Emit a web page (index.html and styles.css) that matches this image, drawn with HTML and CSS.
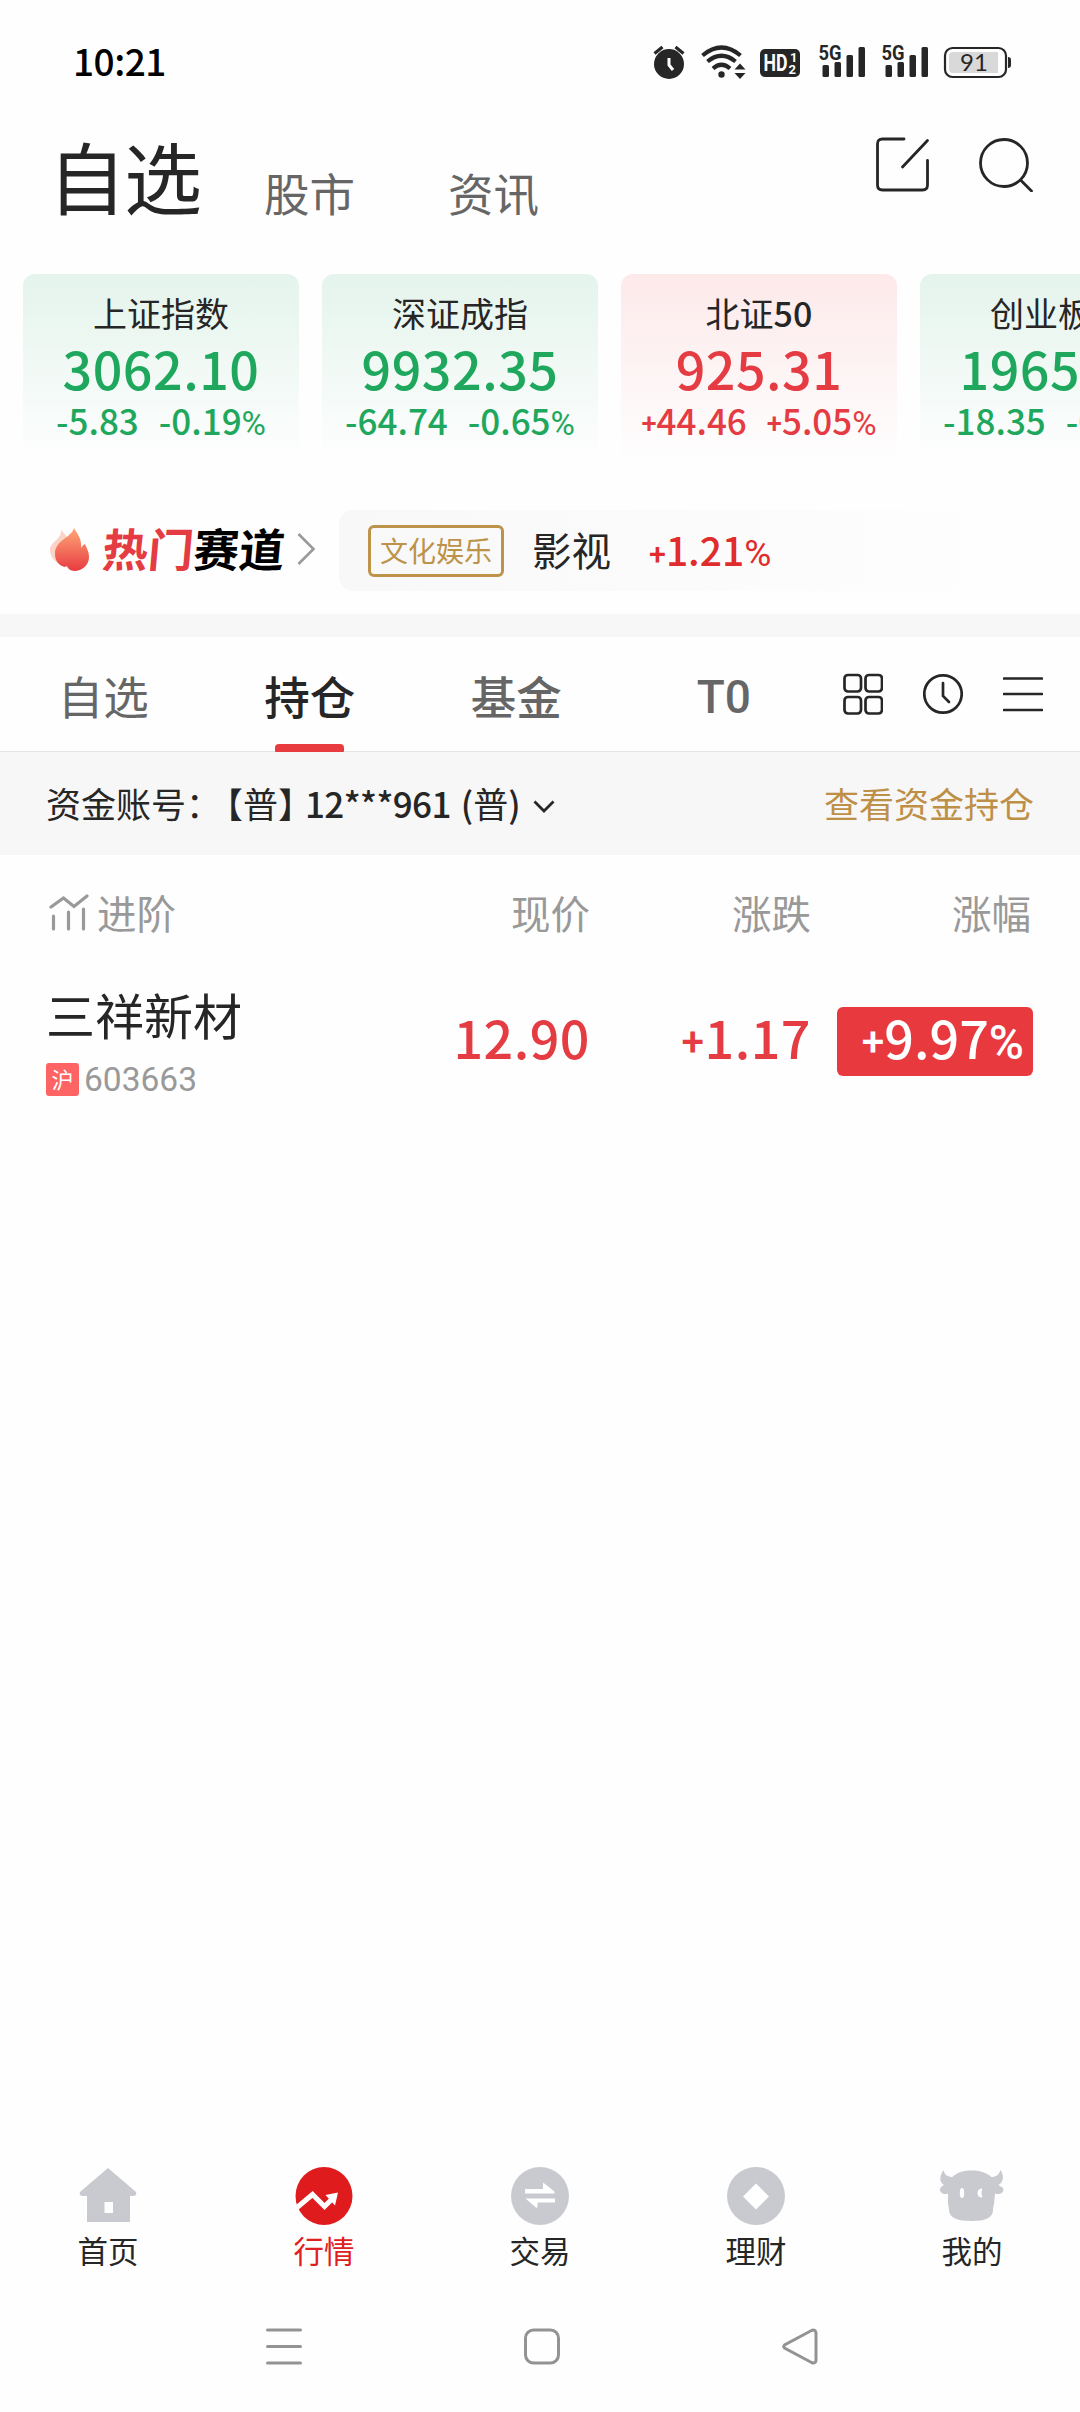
FILE: index.html
```html
<!DOCTYPE html>
<html lang="zh-CN">
<head>
    <meta charset="UTF-8">
    <meta name="viewport" content="width=device-width, initial-scale=1.0">
    <title>行情 - 自选</title>
    <link rel="stylesheet" href="styles.css">
</head>
<body>
    <div class="app">
        <div class="status-bar">
            <span class="time">10:21</span>
            <svg class="status-icons" width="360" height="40" viewBox="652 42 360 40">
                <!-- alarm -->
                <circle cx="669" cy="64" r="15" fill="#262626"/>
                <path d="M654.5 53.5l8-6.5M683.5 53.5l-8-6.5" stroke="#262626" stroke-width="3.2"/>
                <path d="M669 58v7l4 5" fill="none" stroke="#fff" stroke-width="3"/>
                <!-- wifi -->
                <g fill="none" stroke="#262626" stroke-width="4.2">
                    <path d="M702.5 55.5q19-16 38 0"/>
                    <path d="M707.5 61.5q14-11.5 28 0"/>
                    <path d="M713 68.5q8.5-7.5 17 0"/>
                </g>
                <circle cx="721.5" cy="74.5" r="3.2" fill="#262626"/>
                <path d="M734.5 69.5l5.500-6 5.500 6zM734.5 73l5.500 6 5.500-6z" fill="#262626"/>
                <!-- HD -->
                <rect x="760" y="49" width="40" height="28" rx="5" fill="#262626"/>
                <text class="hd" x="763.5" y="71" textLength="24" lengthAdjust="spacingAndGlyphs">HD</text>
                <text class="hd-sub" x="790" y="62">1</text>
                <text class="hd-sub" x="788.5" y="73.5">2</text>
                <!-- signal -->
                <g fill="#262626">
                    <text class="net" x="818.5" y="60" textLength="23" lengthAdjust="spacingAndGlyphs">5G</text>
                    <rect x="822.5" y="65" width="6.5" height="12" rx="1.5"/>
                    <rect x="834.5" y="62" width="6.5" height="15" rx="1.5"/>
                    <rect x="846.5" y="55" width="6.5" height="22" rx="1.5"/>
                    <rect x="858.5" y="47" width="6.5" height="30" rx="1.5"/>
                </g>
                <g fill="#262626" transform="translate(63 0)">
                    <text class="net" x="818.5" y="60" textLength="23" lengthAdjust="spacingAndGlyphs">5G</text>
                    <rect x="822.5" y="65" width="6.5" height="12" rx="1.5"/>
                    <rect x="834.5" y="62" width="6.5" height="15" rx="1.5"/>
                    <rect x="846.5" y="55" width="6.5" height="22" rx="1.5"/>
                    <rect x="858.5" y="47" width="6.5" height="30" rx="1.5"/>
                </g>
                <!-- battery -->
                <rect x="945" y="48" width="61" height="29" rx="7.5" fill="none" stroke="#262626" stroke-width="2.2"/>
                <path d="M953 52h45v21h-45a4 4 0 0 1-4-4v-13a4 4 0 0 1 4-4z" fill="#d9d9d9"/>
                <path d="M1008 57q3 0 3 3v5q0 3-3 3z" fill="#262626"/>
                <text class="battery" x="974" y="71" text-anchor="middle">91</text>
            </svg>
        </div>

        <div class="header">
            <h1>自选</h1>
            <a class="channel">股市</a>
            <a class="channel">资讯</a>
            <div class="header-icons">
                <svg width="56" height="56" viewBox="0 0 56 56">
                    <path d="M29 3H7.500q-5 0-5 5v41q0 5 5 5h40q5 0 5-5V24.500M27.500 31l25-26.500"/>
                </svg>
                <svg width="56" height="56" viewBox="0 0 56 56">
                    <circle cx="26" cy="27" r="23.5"/>
                    <path d="M42.5 44L53.5 55"/>
                </svg>
            </div>
        </div>

        <div class="indexes">
            <div class="index-card down">
                <div class="index-name">上证指数</div>
                <div class="index-price">3062.10</div>
                <div class="index-change"><span>-5.83</span><span>-0.19<i class="pct">%</i></span></div>
            </div>
            <div class="index-card down">
                <div class="index-name">深证成指</div>
                <div class="index-price">9932.35</div>
                <div class="index-change"><span>-64.74</span><span>-0.65<i class="pct">%</i></span></div>
            </div>
            <div class="index-card up">
                <div class="index-name">北证<b>50</b></div>
                <div class="index-price">925.31</div>
                <div class="index-change"><span><i class="plus">+</i>44.46</span><span><i class="plus">+</i>5.05<i class="pct">%</i></span></div>
            </div>
            <div class="index-card down">
                <div class="index-name">创业板指</div>
                <div class="index-price">1965.02</div>
                <div class="index-change"><span>-18.35</span><span>-0.93<i class="pct">%</i></span></div>
            </div>
        </div>

        <div class="hot">
            <svg class="flame" width="42" height="46" viewBox="0 0 42 46">
                <defs>
                    <linearGradient id="fire" x1="0" y1="0" x2="0" y2="1">
                        <stop offset="0" stop-color="#ffa878"/>
                        <stop offset="1" stop-color="#e83b40"/>
                    </linearGradient>
                </defs>
                <path d="M12 4c5 5 8 9 8 14l-6 20C5 37 1 30 1 24c0-8 12-11 11-20z" fill="#fbd3c8"/>
                <path d="M25 2c-3 10-19 12-19 26 0 8 5 12 10 13 1-1 2-1 3 1 1 2 4 3 7 3 9-1 14-7 14-14 0-6-3-10-4-13-2 1-3 2-4 4 1-9-4-15-7-20z" fill="url(#fire)"/>
            </svg>
            <div class="hot-title"><em>热门</em>赛道</div>
            <svg class="hot-arrow" width="20" height="34" viewBox="0 0 20 34">
                <path d="M2.5 2L17.5 17 2.5 32"/>
            </svg>
            <div class="hot-pill">
                <span class="hot-tag">文化娱乐</span>
                <span class="hot-name">影视</span>
                <span class="hot-rate"><i class="plus">+</i>1.21<i class="pct">%</i></span>
            </div>
        </div>

        <div class="tabs">
            <a class="tab">自选</a>
            <a class="tab active">持仓</a>
            <a class="tab medium">基金</a>
            <a class="tab medium latin">T0</a>
            <div class="tab-icons">
                <svg width="40" height="42" viewBox="0 0 40 42">
                    <rect x="1.5" y="2" width="16.5" height="16.5" rx="3.5"/>
                    <rect x="22.5" y="2" width="16.5" height="16.5" rx="3.5"/>
                    <rect x="1.5" y="24" width="16.5" height="16.5" rx="3.5"/>
                    <rect x="22.5" y="24" width="16.5" height="16.5" rx="3.5"/>
                </svg>
                <svg width="40" height="42" viewBox="0 0 40 42">
                    <circle cx="20" cy="21" r="18.7"/>
                    <path d="M20 10v13l6 6"/>
                </svg>
                <svg width="40" height="42" viewBox="0 0 40 42">
                    <path d="M1 5.5h38M1 21h38M1 37h38"/>
                </svg>
            </div>
        </div>

        <div class="account">
            <span class="account-label">资金账号：</span>
            <span class="bracket">【</span><span>普</span><span class="bracket">】</span>
            <span class="account-no">12***961</span>
            <span class="account-type"><b>(</b>普<b>)</b></span>
            <svg width="24" height="16" viewBox="0 0 24 16"><path d="M2.5 2.5l9.500 9.500 9.500-9.500"/></svg>
            <a class="account-link">查看资金持仓</a>
        </div>

        <div class="row table-head">
            <div class="col-name">
                <svg width="40" height="38" viewBox="0 0 40 38">
                    <path d="M2 13L14.5 4 25 12.5 38 2M4.500 22v13M19.500 18v17M34.500 15v20"/>
                </svg>
                进阶
            </div>
            <div class="col">现价</div>
            <div class="col">涨跌</div>
            <div class="col">涨幅</div>
        </div>

        <div class="row stock">
            <div class="stock-info">
                <div class="stock-name">三祥新材</div>
                <div class="stock-code"><span class="market">沪</span>603663</div>
            </div>
            <div class="col price">12.90</div>
            <div class="col price"><i class="plus">+</i>1.17</div>
            <div class="col"><span class="rate-badge"><i class="plus">+</i>9.97<i class="pct">%</i></span></div>
        </div>

        <div class="bottom-nav">
            <a class="nav-item">
                <svg width="66" height="60" viewBox="0 0 66 60">
                    <path fill-rule="evenodd" d="M33 2L61 26q1.500 4-3.500 4H55V56H12V30H8.500q-5 0-3.500-4zM29.500 36v11h8.500v-11z"/>
                </svg>
                首页
            </a>
            <a class="nav-item active">
                <svg width="66" height="60" viewBox="0 0 66 60">
                    <ellipse cx="33" cy="30" rx="28.5" ry="29"/>
                    <path class="hole-line" d="M6 41.500L21.500 28.500 33.500 40.500 42 32"/>
                    <path class="hole" d="M34.500 29l12.500-2.500-3 13z"/>
                </svg>
                行情
            </a>
            <a class="nav-item">
                <svg width="66" height="60" viewBox="0 0 66 60">
                    <circle cx="33" cy="30" r="29"/>
                    <path class="hole" d="M18 23h18v-6.500l11.500 9v2H18zM48 32.500H18.500l11 9.500 1-1v-4.500H48z"/>
                </svg>
                交易
            </a>
            <a class="nav-item">
                <svg width="66" height="60" viewBox="0 0 66 60">
                    <circle cx="33" cy="30" r="29"/>
                    <path class="hole" d="M33 17.500L46 30.500 33 43.500 20 30.500z"/>
                </svg>
                理财
            </a>
            <a class="nav-item">
                <svg width="66" height="60" viewBox="0 0 66 60">
                    <path d="M4.500 4C.5 10 0 16 5 19q-4 2-4 5c0 3 4 5 8 3.500V38q1 3 1 6c0 8 9 11 22.500 11S54 52 54 44q0-3 1-6l1-10.500c4 1.500 8 0 8.500-3.500 0-3-4-4-5-5 5-3 6-9 2-15-1.500 5-5 7-9 7C47 6 40 4.500 32.500 4.500S18 6 13.500 11C9 11 5.500 9 4.500 4z"/>
                    <ellipse class="hole" cx="23" cy="27" rx="2.2" ry="5"/>
                    <path class="hole" d="M43.500 22.500q-5 0-5 4.500t5 4.500q-2-4.500 0-9z"/>
                </svg>
                我的
            </a>
        </div>

        <div class="system-nav">
            <svg width="40" height="40" viewBox="0 0 40 40"><path d="M3.500 4h33M3.500 20.500h33M3.500 37h33"/></svg>
            <svg width="40" height="40" viewBox="0 0 40 40"><rect x="3.500" y="4" width="33" height="33" rx="8"/></svg>
            <svg width="40" height="40" viewBox="0 0 40 40"><path d="M4.500 19q-1.500 1.500 0 3L31.500 36.500q4 1.500 4.500-2V7q-.5-4-4.500-2.500z"/></svg>
        </div>
    </div>
</body>
</html>
```

FILE: styles.css
```css
* {
    box-sizing: border-box;
}
body {
    margin: 0;
    background: #fefefe;
    color: #262626;
    font-family: "Noto Sans CJK SC", sans-serif;
    overflow: hidden;
}
svg {
    display: block;
    flex: none;
}
i, em {
    font-style: normal;
}
.app {
    width: 1080px;
    height: 2412px;
    display: flex;
    flex-direction: column;
    overflow: hidden;
}

/* percent and plus signs are smaller than the digits */
.pct {
    font-family: Roboto, sans-serif;
    font-size: 0.95em;
    font-weight: 400;
    line-height: 0;
}
.plus {
    font-family: Roboto, sans-serif;
    font-size: 0.78em;
    line-height: 0;
    vertical-align: 0.08em;
}

/* status bar */
.status-bar {
    height: 124px;
    padding: 42px 68px 0 73px;
    display: flex;
    justify-content: space-between;
}
.time {
    font-size: 37px;
    font-weight: 500;
    line-height: 36px;
    color: #000;
    letter-spacing: -0.5px;
}
.status-icons text {
    font-family: Roboto, sans-serif;
    font-weight: 700;
}
.hd {
    font-size: 23px;
    fill: #fff;
}
.hd-sub {
    font-size: 13px;
    fill: #fff;
}
.net {
    font-size: 20px;
}
.status-icons .battery {
    font-family: Lato, sans-serif;
    font-size: 24px;
    font-weight: 400;
    fill: #262626;
}

/* page header */
.header {
    height: 150px;
    padding-left: 48px;
    display: flex;
    align-items: flex-start;
}
.header h1 {
    margin: 9px 0 0;
    font-size: 78px;
    font-weight: 400;
    line-height: 84px;
    width: 216px;
    letter-spacing: -2px;
}
.channel {
    font-size: 45.5px;
    line-height: 50px;
    margin-top: 43px;
    width: 184px;
    color: #666;
}
.header-icons {
    margin-left: auto;
    padding: 12px 46px 0 0;
    display: flex;
    gap: 47px;
}
.header-icons svg {
    fill: none;
    stroke: #262626;
    stroke-width: 2.8;
    stroke-linecap: round;
}

/* index cards */
.indexes {
    display: flex;
    gap: 23px;
    padding-left: 23px;
}
.index-card {
    flex: none;
    width: 276px;
    height: 186px;
    padding-top: 19px;
    border-radius: 12px 12px 0 0;
    text-align: center;
    white-space: nowrap;
}
.index-card.down {
    background: linear-gradient(#e4f4ec, #fefefe);
    color: #1fa85d;
}
.index-card.up {
    background: linear-gradient(#fde9ea, #fefefe);
    color: #e43c42;
}
.index-name {
    font-size: 34px;
    line-height: 40px;
    color: #262626;
}
.index-name b {
    font-weight: 500;
}
.index-price {
    margin-top: 10px;
    font-size: 52px;
    font-weight: 500;
    line-height: 50px;
    letter-spacing: 0.5px;
}
.index-change {
    margin-top: 7px;
    display: flex;
    justify-content: center;
    gap: 20px;
    font-size: 35px;
    font-weight: 500;
    line-height: 40px;
}

/* hot sector strip */
.hot {
    height: 154px;
    padding: 50px 0 0 49px;
    display: flex;
    align-items: flex-start;
}
.flame {
    margin-top: 16px;
}
.hot-title {
    margin: 12px 0 0 12px;
    width: 193px;
    font-size: 45.5px;
    font-weight: 700;
    line-height: 50px;
    color: #000;
    transform: skewX(-5deg);
    white-space: nowrap;
}
.hot-title em {
    color: #e43c42;
}
.hot-arrow {
    margin: 22px 23px 0 0;
    fill: none;
    stroke: #999;
    stroke-width: 2.6;
}
.hot-pill {
    width: 670px;
    height: 81px;
    padding-left: 29px;
    border-radius: 14px;
    background: linear-gradient(90deg, #f8f8f8, #fefefe);
    display: flex;
    align-items: center;
}
.hot-tag {
    width: 136px;
    height: 52px;
    border: 3px solid #bd9349;
    border-radius: 6px;
    font-size: 28px;
    line-height: 45px;
    text-align: center;
    color: #bd9349;
}
.hot-name {
    margin: 0 0 3px 28px;
    font-size: 39.5px;
    line-height: 44px;
}
.hot-rate {
    margin: 0 0 4px 38px;
    font-size: 39px;
    font-weight: 500;
    line-height: 44px;
    color: #e02c2c;
}

/* tabs */
.tabs {
    height: 138px;
    border-top: 23px solid #f7f7f7;
    border-bottom: 1px solid #e4e4e4;
    display: flex;
    align-items: flex-start;
}
.tab {
    width: 206.5px;
    height: 115px;
    padding-top: 33px;
    font-size: 45.5px;
    line-height: 50px;
    text-align: center;
    color: #666;
}
.tab.medium {
    font-weight: 500;
}
.tab.active {
    position: relative;
    font-weight: 500;
    color: #262626;
}
.tab.active::after {
    content: "";
    position: absolute;
    left: 68px;
    bottom: 0;
    width: 69px;
    height: 8px;
    border-radius: 4px 4px 1px 1px;
    background: #e83b40;
}
.tab.latin {
    padding-left: 2px;
    padding-top: 35px;
    font-family: Roboto, sans-serif;
    font-size: 46px;
}
.tab-icons {
    padding: 36px 0 0 17px;
    display: flex;
    gap: 40px;
}
.tab-icons svg {
    fill: none;
    stroke: #262626;
    stroke-width: 2.7;
    stroke-linecap: round;
}

/* account */
.account {
    height: 103px;
    padding: 0 46px 2px;
    display: flex;
    align-items: center;
    background: #f7f7f7;
    font-size: 35px;
    line-height: 52px;
}
.account-label {
    width: 182px;
}
.bracket {
    width: 15px;
    display: flex;
    justify-content: flex-end;
    overflow: hidden;
}
.bracket + span + .bracket {
    justify-content: flex-start;
}
.account-no {
    font-weight: 500;
    margin-left: 12px;
    letter-spacing: -0.6px;
}
.account-type {
    margin-left: 10px;
}
.account b {
    font-weight: 500;
}
.account svg {
    margin: 8px 0 0 11px;
    fill: none;
    stroke: #262626;
    stroke-width: 2.8;
}
.account-link {
    margin-left: auto;
    color: #be8f46;
}

/* holdings table */
.row {
    padding: 0 47px 0 46px;
    display: grid;
    grid-template-columns: 322px 222px 221px 1fr;
}
.col {
    text-align: right;
}
.table-head {
    height: 116px;
    padding-top: 31px;
    font-size: 39.5px;
    line-height: 52px;
    color: #999;
}
.table-head .col:last-child {
    padding-right: 2px;
}
.col-name {
    display: flex;
    gap: 8px;
}
.col-name svg {
    margin: 8px 0 0 3px;
    fill: none;
    stroke: #999;
    stroke-width: 3.2;
    stroke-linecap: round;
}
.stock-name {
    margin-top: 13px;
    font-size: 49px;
    line-height: 60px;
}
.stock-code {
    margin-top: 19px;
    display: flex;
    align-items: center;
    gap: 5px;
    font-family: Roboto, sans-serif;
    font-size: 33.5px;
    line-height: 33px;
    color: #999;
}
.market {
    width: 33px;
    height: 33px;
    border-radius: 3px;
    background: #ff6464;
    color: #fff;
    font-family: "Noto Sans CJK SC", sans-serif;
    font-size: 22px;
    line-height: 31px;
    text-align: center;
}
.price {
    padding-top: 39px;
    font-size: 52px;
    font-weight: 500;
    line-height: 54px;
    letter-spacing: 0.5px;
    color: #e43c42;
}
.rate-badge {
    display: inline-block;
    width: 196px;
    height: 69px;
    margin-top: 36px;
    padding-right: 9px;
    border-radius: 6px;
    background: #e8393f;
    color: #fff;
    font-size: 52px;
    font-weight: 500;
    line-height: 60px;
}
.rate-badge .pct {
    font-weight: 500;
    font-size: 0.92em;
}

/* bottom navigation */
.bottom-nav {
    margin-top: auto;
    height: 146px;
    padding-top: 6px;
    display: flex;
}
.nav-item {
    flex: 1;
    display: flex;
    flex-direction: column;
    align-items: center;
    font-size: 30.5px;
    line-height: 34px;
    gap: 7px;
}
.nav-item svg {
    fill: #c9cad0;
}
.nav-item.active {
    color: #e02020;
}
.nav-item.active svg {
    fill: #e01b1e;
}
.nav-item .hole {
    fill: #fff;
}
.nav-item .hole-line {
    fill: none;
    stroke: #fff;
    stroke-width: 5;
}
.system-nav {
    height: 106px;
    padding: 20px 260px 0 264px;
    display: flex;
    justify-content: space-between;
}
.system-nav svg {
    fill: none;
    stroke: #939393;
    stroke-width: 3;
    stroke-linecap: round;
}
```
